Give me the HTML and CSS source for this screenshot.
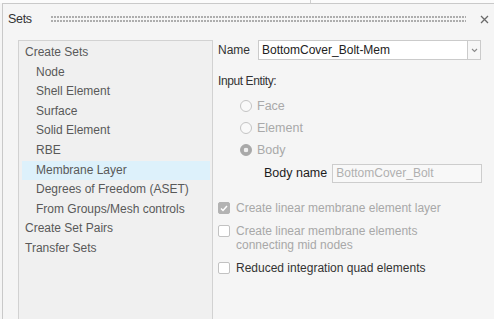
FILE: index.html
```html
<!DOCTYPE html>
<html lang="en">
<head>
  <meta charset="UTF-8" />
  <title>Sets</title>
  <link rel="stylesheet" href="styles.css">
</head>
<body>
  <div class="topstrip"><span class="tick"></span></div>
  <div class="window">
    <header class="titlebar">
      <span class="title">Sets</span>
      <span class="grip"></span>
      <svg class="close" width="9" height="9" viewBox="0 0 9 9"><path d="M1 1L8 8M8 1L1 8" stroke="#6a6a6a" stroke-width="1.3" /></svg>
    </header>

    <div class="content">
      <aside class="tree">
        <div class="row">Create Sets</div>
        <div class="row child">Node</div>
        <div class="row child">Shell Element</div>
        <div class="row child">Surface</div>
        <div class="row child">Solid Element</div>
        <div class="row child">RBE</div>
        <div class="row child selected">Membrane Layer</div>
        <div class="row child">Degrees of Freedom (ASET)</div>
        <div class="row child">From Groups/Mesh controls</div>
        <div class="row">Create Set Pairs</div>
        <div class="row">Transfer Sets</div>
      </aside>

      <section class="form">
        <div class="name-row">
          <span class="label">Name</span>
          <div class="combo">
            <span class="combo-text">BottomCover_Bolt-Mem</span>
            <span class="combo-btn">
              <svg width="7" height="5" viewBox="0 0 7 5"><path d="M1 1L3.5 3.5L6 1" fill="none" stroke="#8a8a8a" stroke-width="1.1" /></svg>
            </span>
          </div>
        </div>

        <div class="section-label">Input Entity:</div>

        <div class="radios">
          <div class="radio-row"><span class="radio"></span>Face</div>
          <div class="radio-row"><span class="radio"></span>Element</div>
          <div class="radio-row"><span class="radio on"></span>Body</div>
        </div>

        <div class="body-row">
          <span class="body-label">Body name</span>
          <div class="field">BottomCover_Bolt</div>
        </div>

        <div class="check-row disabled"><span class="box checked">
          <svg width="8" height="7" viewBox="0 0 8 7"><path d="M1 3.5L3 5.5L7 1" fill="none" stroke="#fff" stroke-width="1.5" /></svg>
        </span><span>Create linear membrane element layer</span></div>
        <div class="check-row disabled"><span class="box"></span><span>Create linear membrane elements<br>connecting mid nodes</span></div>
        <div class="check-row"><span class="box"></span><span>Reduced integration quad elements</span></div>
      </section>
    </div>
  </div>
</body>
</html>
```

FILE: styles.css
```css
* { box-sizing: border-box; }

body {
  margin: 0;
  background: #f5f5f5;
  font-family: "Liberation Sans", Arial, sans-serif;
  font-size: 12px;
  color: #333;
  overflow: hidden;
}

.topstrip {
  height: 3px;
  background: #fbfbfb;
  position: relative;
}

.topstrip .tick {
  position: absolute;
  left: 310px;
  top: 0;
  width: 1px;
  height: 3px;
  background: #cfcfcf;
}

.window {
  margin-left: 2px;
  border-left: 1px solid #c9c9c9;
  border-top: 1px solid #c9c9c9;
  height: 320px;
}

.titlebar {
  display: flex;
  align-items: center;
  height: 30px;
  padding: 0 5px;
}

.title {
  color: #333;
  font-size: 12.5px;
  letter-spacing: -0.3px;
}

.grip {
  flex: 1;
  height: 7px;
  margin: 1px 14px 0 19px;
  background-image: radial-gradient(circle at 1px 1px, #adadad 0.8px, transparent 1.2px);
  background-size: 3px 4px;
}

.content {
  display: flex;
  padding-top: 6px;
}

.tree {
  margin-left: 15px;
  width: 195px;
  height: 290px;
  background: #f0f0f0;
  border: 1px solid #d2d2d2;
  padding: 2px 2px 0 3px;
}

.row {
  height: 19.6px;
  line-height: 19.6px;
  color: #595959;
  padding-left: 3px;
}

.row.child { padding-left: 14px; }

.row.selected { background: #ddf1fb; }

.form {
  flex: 1;
  padding-left: 5px;
}

.name-row {
  display: flex;
  align-items: center;
  height: 20px;
}

.name-row .label {
  width: 40px;
  color: #333;
}

.combo {
  display: flex;
  width: 223px;
  height: 20px;
  background: #fff;
  border: 1px solid #cbcbcb;
}

.combo-text {
  flex: 1;
  line-height: 18px;
  padding-left: 3px;
  color: #222;
}

.combo-btn {
  width: 13px;
  border-left: 1px solid #cbcbcb;
  background: #f7f7f7;
  display: flex;
  align-items: center;
  justify-content: center;
}

.section-label {
  margin-top: 14px;
  color: #333;
  letter-spacing: -0.4px;
}

.radios {
  margin-top: 7px;
  padding-left: 22px;
}

.radio-row {
  display: flex;
  align-items: center;
  height: 22px;
  color: #a9a9a9;
  font-size: 12.5px;
}

.radio {
  width: 12px;
  height: 12px;
  border-radius: 50%;
  border: 1px solid #c4c4c4;
  background: #f9f9f9;
  margin-right: 5px;
}

.radio.on {
  border-color: #a8a8a8;
  background: radial-gradient(circle, #efefef 0 2px, #a9a9a9 2.6px);
}

.body-row {
  display: flex;
  align-items: center;
  margin-top: 2px;
  padding-left: 46px;
  height: 20px;
}

.body-label {
  color: #1c1c1c;
  margin-right: 5px;
  font-size: 12.5px;
}

.field {
  width: 150px;
  height: 19px;
  border: 1px solid #cdcdcd;
  background: #f8f8f8;
  color: #b0b0b0;
  line-height: 17px;
  padding-left: 3px;
}

.check-row {
  display: flex;
  align-items: flex-start;
  margin-top: 18px;
  color: #333;
  line-height: 14px;
}

.check-row + .check-row { margin-top: 9px; }

.check-row.disabled { color: #a8a8a8; }

.box {
  flex: none;
  width: 12px;
  height: 12px;
  margin: 1px 6px 0 0;
  border: 1px solid #c2c2c2;
  border-radius: 2px;
  background: #fff;
  display: flex;
  align-items: center;
  justify-content: center;
}

.box.checked {
  background: #b3b3b3;
  border-color: #b3b3b3;
}
```
